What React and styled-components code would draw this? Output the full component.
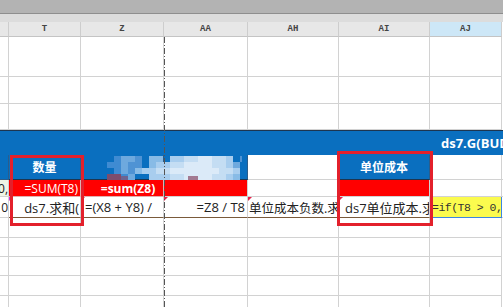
import styled, { createGlobalStyle } from 'styled-components';

const GlobalStyle = createGlobalStyle`
  html, body {
    margin: 0;
    padding: 0;
    background: #ffffff;
    overflow: hidden;
  }
`;

const COLS = '9px 72px 83px 84px 91px 91px 72px 1fr';

const Sheet = styled.div`
  position: relative;
  width: 503px;
  height: 307px;
  overflow: hidden;
  font-family: 'Open Sans', 'Noto Sans CJK SC', sans-serif;
`;

const TitleBar = styled.div`
  height: 13px;
  background: #b3b3b3;
  border-bottom: 1px solid #8e8e8e;
`;

const Strip = styled.div`
  height: 8px;
  background: #dcdcdc;
`;

const Row = styled.div`
  display: grid;
  grid-template-columns: ${COLS};
  height: ${(p) => p.$h}px;
`;

const HeadCell = styled.div`
  box-sizing: border-box;
  display: flex;
  align-items: center;
  justify-content: center;
  background: ${(p) => (p.$active ? '#cde7f7' : '#e7e7e7')};
  border-right: 1px solid #cdcdcd;
  border-bottom: 1px solid #c4c4c4;
  font-family: 'Liberation Mono', monospace;
  font-size: 9px;
  font-weight: 700;
  color: #444;
`;

const Cell = styled.div`
  box-sizing: border-box;
  display: flex;
  align-items: center;
  justify-content: ${(p) => p.$justify || 'flex-start'};
  padding: 0 2px;
  overflow: hidden;
  white-space: nowrap;
  background: ${(p) => p.$bg || '#ffffff'};
  color: ${(p) => p.$color || '#222'};
  font-size: ${(p) => p.$size || 13}px;
  font-weight: ${(p) => (p.$bold ? 700 : 400)};
  border-right: 1px solid ${(p) => p.$line || '#d2d2d2'};
  border-bottom: 1px solid ${(p) => p.$under || p.$line || '#d2d2d2'};
  position: relative;
`;

const Mono = styled.span`
  font-family: 'Liberation Mono', monospace;
  font-size: 11.5px;
  letter-spacing: -0.5px;
  color: #333;
`;

const Banner = styled.div`
  grid-column: 1 / -1;
  box-sizing: border-box;
  background: #0a6fbf;
  border-top: 1px solid #1d3550;
  display: flex;
  align-items: center;
  padding-left: 441px;
  overflow: hidden;
  white-space: nowrap;
  color: #ffffff;
  font-weight: 700;
  font-size: 13px;
`;

const Flag = styled.span`
  position: absolute;
  top: 0;
  left: 0;
  width: 0;
  height: 0;
  border-top: 4px solid ${(p) => p.$c || '#e8204a'};
  border-right: 4px solid transparent;
`;

const PageBreak = styled.div`
  position: absolute;
  left: 164px;
  top: 37px;
  bottom: 0;
  width: 1px;
  background: repeating-linear-gradient(
    to bottom,
    #555 0 6px,
    transparent 6px 8px,
    #555 8px 9px,
    transparent 9px 11px
  );
`;

const Marker = styled.div`
  position: absolute;
  left: ${(p) => p.$x}px;
  top: ${(p) => p.$y}px;
  width: ${(p) => p.$w}px;
  height: ${(p) => p.$h}px;
  box-sizing: border-box;
  border: 3px solid #e3202b;
  pointer-events: none;
`;

const Mosaic = styled.svg`
  position: absolute;
  left: 100px;
  top: 156px;
`;

const blocks = [
  '..abbc.dd.eeffggffe.c',
  '.aabcc.deeffggggffeb',
  '..abcdeeffgggggggffe',
  '.hhab..eeeffggggffed',
];

const palette = {
  a: '#3f8bd2',
  b: '#6ea9de',
  c: '#4f93d4',
  d: '#88bbe6',
  e: '#a8cdee',
  f: '#c4ddf3',
  g: '#dbeaf8',
  h: '#7d4d6c',
};

function MosaicBlur() {
  return (
    <Mosaic width="142" height="24" viewBox="0 0 142 24">
      {blocks.map((line, r) =>
        line.split('').map((ch, c) =>
          palette[ch] ? (
            <rect key={`${r}-${c}`} x={c * 7} y={r * 6} width="7" height="6" fill={palette[ch]} />
          ) : null
        )
      )}
      <rect x="88" y="20" width="10" height="4" fill="#8a4a66" opacity="0.7" />
      <rect x="20" y="20" width="8" height="4" fill="#8a4a66" opacity="0.6" />
    </Mosaic>
  );
}

const heads = ['', 'T', 'Z', 'AA', 'AH', 'AI', 'AJ'];

function EmptyRow({ h }) {
  return (
    <Row $h={h}>
      {heads.map((k) => (
        <Cell key={k} />
      ))}
    </Row>
  );
}

const BLUE = '#0a6fbf';
const RED = '#ff0000';

export default function App() {
  return (
    <>
      <GlobalStyle />
      <Sheet>
        <TitleBar />
        <Strip />
        <Row $h={15}>
          {heads.map((k) => (
            <HeadCell key={k} $active={k === 'AJ'}>
              {k}
            </HeadCell>
          ))}
        </Row>
        <EmptyRow h={40} />
        <EmptyRow h={27} />
        <EmptyRow h={26} />
        <Row $h={25}>
          <Banner>ds7.G(BUDGET)</Banner>
        </Row>
        <Row $h={25}>
          <Cell $bg={BLUE} $line="#2a5d8c" />
          <Cell $bg={BLUE} $line="#2a5d8c" $under="#1d3550" $justify="center" $color="#fff" $bold $size={12}>
            数量
          </Cell>
          <Cell $bg={BLUE} $line="#2a5d8c" $under="#1d3550" />
          <Cell $bg={BLUE} $line="#2a5d8c" $under="#1d3550" />
          <Cell />
          <Cell $bg={BLUE} $line="#2a5d8c" $under="#1d3550" $justify="center" $color="#fff" $bold $size={12}>
            单位成本
          </Cell>
          <Cell />
          <Cell />
        </Row>
        <Row $h={17}>
          <Cell $bg="#eef5e6" $justify="flex-end" $size={12} style={{ padding: 0 }}>
            0,
          </Cell>
          <Cell $bg={RED} $line="#e0b0b0" $justify="flex-end" $color="#fff" $size={12}>
            =SUM(T8)
          </Cell>
          <Cell $bg={RED} $line="#e0b0b0" $justify="center" $color="#fff" $bold $size={12} style={{ paddingLeft: 14 }}>
            =sum(Z8)
          </Cell>
          <Cell $bg={RED} />
          <Cell />
          <Cell $bg={RED} />
          <Cell />
          <Cell />
        </Row>
        <Row $h={21}>
          <Cell $justify="flex-end" $size={12} style={{ padding: 0 }}>
            0
          </Cell>
          <Cell $justify="flex-end" $under="#7a5a3a" style={{ paddingRight: 1 }}>
            <Flag $c="#d12bd8" />
            ds7.求和(
          </Cell>
          <Cell $under="#7a5a3a" style={{ paddingLeft: 4 }}>
            <Flag />
            =(X8 + Y8) /
          </Cell>
          <Cell $justify="flex-end" $under="#7a5a3a">
            <Flag />
            =Z8 / T8
          </Cell>
          <Cell $line="#c9a57e" $under="#7a5a3a" $size={12.5} style={{ paddingLeft: 1 }}>
            <Flag />
            单位成本负数.求
          </Cell>
          <Cell $under="#7a5a3a" style={{ paddingLeft: 6 }}>
            <Flag />
            ds7单位成本.求
          </Cell>
          <Cell $bg="#fbfb4e" $line="#3d86e0" style={{ borderLeft: '2px solid #3d86e0', paddingLeft: 0 }}>
            <Mono>=if(T8 &gt; 0,</Mono>
          </Cell>
          <Cell />
        </Row>
        <EmptyRow h={20} />
        <EmptyRow h={19} />
        <EmptyRow h={19} />
        <EmptyRow h={20} />
        <EmptyRow h={20} />
        <MosaicBlur />
        <PageBreak />
        <Marker $x={10} $y={155} $w={74} $h={71} />
        <Marker $x={337} $y={151} $w={96} $h={75} />
      </Sheet>
    </>
  );
}
